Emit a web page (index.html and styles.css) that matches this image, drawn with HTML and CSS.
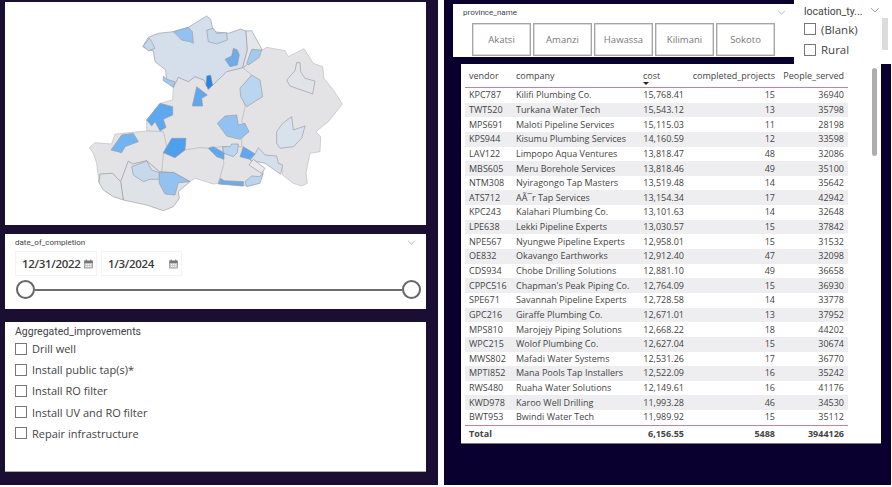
FILE: index.html
```html
<!DOCTYPE html>
<html lang="en">
<head>
<meta charset="utf-8">
<title>Vendor report</title>
<link rel="stylesheet" href="styles.css">
</head>
<body>
<div class="page">
  <aside class="left">
    <section class="panel map-panel">
      <svg class="map" viewBox="15 6 1263 669" aria-label="Map">
        <g class="areas">
          <polygon class="grey" points="728,203 740,195 770,160 787,150 800,142 855,152 865,170 912,146 940,190 968,200 972,235 1000,270 1027,312 985,365 948,395 962,410 960,455 930,460 918,520 922,550 905,558 880,550 848,525 845,495 795,470 765,462 745,450 725,440 725,400 745,395 725,365 735,320 722,265 755,225"/>
          <polygon class="grey" points="518,300 520,262 535,232 565,245 585,230 612,240 625,268 680,215 728,203 755,225 722,265 735,320 725,365 745,395 725,405 725,440 668,440 625,445 600,443 555,450 490,460 500,440 490,395 440,393 440,360 480,310"/>
          <polygon class="pale" points="428,140 445,112 475,100 520,95 565,82 620,48 632,58 640,95 685,100 722,87 738,93 742,150 728,203 680,215 625,268 612,240 585,230 565,245 535,232 520,262 500,240 497,210 465,185 460,152 445,150"/>
          <polygon class="ne" points="738,93 755,92 787,150 770,160 740,195 728,203 742,150"/>
          <polygon class="grey" points="490,460 555,450 600,443 625,445 668,440 668,470 672,490 655,550 640,552 585,535 570,545 520,518 478,515 485,515"/>
          <polygon class="grey" points="668,440 725,440 745,450 765,462 750,480 790,515 775,550 730,558 655,550 672,490 668,470"/>
          <polygon class="grey" points="268,443 285,428 335,432 345,402 440,393 490,395 500,440 490,460 485,515 478,515 440,482 398,492 385,483 362,545 338,520 300,522 297,548 290,490 280,460"/>
          <polygon class="sw" points="385,483 398,492 440,482 478,515 522,518 570,545 535,575 538,595 520,620 490,632 440,615 370,600 362,545"/>
          <polygon class="sw" points="297,548 300,522 338,520 362,545 370,600 340,590 310,570"/>
          <polygon class="pale" points="775,443 795,465 830,468 835,490 848,495 842,523 795,490 750,480 765,462"/>
          <polygon class="box" points="760,478 795,505 785,520 747,495"/>
          <polygon class="b5" points="520,95 565,82 577,95 580,130 570,125 545,120"/>
          <polygon class="b2" points="620,90 640,85 650,100 680,98 682,120 650,132 625,125"/>
          <polygon class="b2" points="430,138 448,115 455,125 465,145 445,152"/>
          <polygon class="b7" points="675,178 695,168 700,145 712,150 718,165 712,195 690,200"/>
          <polygon class="b4" points="755,148 785,150 778,172 745,195 740,190"/>
          <polygon class="b9" points="620,228 632,225 638,255 625,268 618,255"/>
          <polygon class="b4" points="490,228 500,238 525,245 520,262 490,242"/>
          <polygon class="b8" points="590,260 622,285 605,295 608,318 577,318"/>
          <polygon class="b8" points="480,310 518,320 518,345 490,358 498,382 480,393 465,365 455,378 440,360"/>
          <polygon class="b6" points="365,405 400,400 415,425 375,440 365,458 333,450"/>
          <polygon class="b85" points="515,415 558,415 555,450 525,473 490,458"/>
          <polygon class="b5" points="675,348 710,345 715,375 735,370 747,395 720,418 680,408 652,370"/>
          <polygon class="b3" points="720,265 755,225 780,240 788,290 740,320 722,290"/>
          <polygon class="b8" points="625,445 640,440 672,458 672,478 650,470"/>
          <polygon class="b3" points="668,440 690,440 695,432 715,432 712,458 700,470 672,460"/>
          <polygon class="b8" points="730,440 765,462 750,478 720,470"/>
          <polygon class="b7" points="662,535 672,542 730,545 730,558 655,552"/>
          <polygon class="b3" points="735,545 755,528 778,530 790,520 780,550 740,560"/>
          <polygon class="b2" points="395,500 440,483 455,510 478,518 478,538 450,538 430,545 400,525"/>
          <polygon class="b5" points="478,518 520,517 570,545 535,548 525,585 495,582 478,550"/>
          <polygon class="e1" points="860,240 885,212 890,188 900,188 902,215 915,235 945,243 938,282 870,258"/>
          <polygon class="e2" points="830,395 848,370 875,350 880,390 915,378 905,415 880,440 840,445 830,430"/>
        </g>
      </svg>
    </section>

    <section class="panel date-panel">
      <div class="slicer-head">
        <span class="small-title">date_of_completion</span>
        <svg class="chevron" viewBox="0 0 10 6"><polyline points="1,1 5,5 9,1"/></svg>
      </div>
      <div class="date-boxes">
        <div class="date-box">
          <span>12/31/2022</span>
          <svg class="cal" viewBox="0 0 10 10"><rect class="cal-bg" x="0.5" y="1.5" width="9" height="8"/><rect class="cal-top" x="0.5" y="1.5" width="9" height="2.5"/><line class="cal-pin" x1="2.5" y1="0" x2="2.5" y2="2"/><line class="cal-pin" x1="7.5" y1="0" x2="7.5" y2="2"/><path class="cal-grid" d="M2 5.5h1.4M4.3 5.5h1.4M6.6 5.5h1.4M2 7.7h1.4M4.3 7.7h1.4M6.6 7.7h1.4"/></svg>
        </div>
        <div class="date-box">
          <span>1/3/2024</span>
          <svg class="cal" viewBox="0 0 10 10"><rect class="cal-bg" x="0.5" y="1.5" width="9" height="8"/><rect class="cal-top" x="0.5" y="1.5" width="9" height="2.5"/><line class="cal-pin" x1="2.5" y1="0" x2="2.5" y2="2"/><line class="cal-pin" x1="7.5" y1="0" x2="7.5" y2="2"/><path class="cal-grid" d="M2 5.5h1.4M4.3 5.5h1.4M6.6 5.5h1.4M2 7.7h1.4M4.3 7.7h1.4M6.6 7.7h1.4"/></svg>
        </div>
      </div>
      <div class="slider">
        <span class="handle"></span>
        <span class="track"></span>
        <span class="handle"></span>
      </div>
    </section>

    <section class="panel agg-panel">
      <h2 class="agg-title">Aggregated_improvements</h2>
      <ul class="checks">
        <li><span class="box-input"></span>Drill well</li>
        <li><span class="box-input"></span>Install public tap(s)*</li>
        <li><span class="box-input"></span>Install RO filter</li>
        <li><span class="box-input"></span>Install UV and RO filter</li>
        <li><span class="box-input"></span>Repair infrastructure</li>
      </ul>
    </section>
  </aside>

  <main class="right">
    <div class="top-row">
      <section class="province">
        <div class="slicer-head">
          <span class="small-title">province_name</span>
          <svg class="chevron" viewBox="0 0 10 6"><polyline points="1,1 5,5 9,1"/></svg>
        </div>
        <div class="tiles">
          <span class="tile">Akatsi</span>
          <span class="tile">Amanzi</span>
          <span class="tile">Hawassa</span>
          <span class="tile">Kilimani</span>
          <span class="tile">Sokoto</span>
        </div>
      </section>
      <section class="location">
        <div class="loc-head">
          <span>location_ty...</span>
          <svg class="chevron loc-chevron" viewBox="0 0 10 6"><polyline points="1,1 5,5 9,1"/></svg>
        </div>
        <div class="loc-item"><span class="box-input"></span>(Blank)</div>
        <div class="loc-item"><span class="box-input"></span>Rural</div>
        <span class="loc-scroll"></span>
      </section>
    </div>

    <section class="table-card">
      <div class="row head">
        <span>vendor</span><span>company</span>
        <span class="cost-head">cost<i class="sort"></i></span>
        <span class="num">completed_projects</span><span class="num">People_served</span>
      </div>
      <div class="row"><span>KPC787</span><span>Kilifi Plumbing Co.</span><span class="num">15,768.41</span><span class="num">15</span><span class="num">36940</span></div>
      <div class="row"><span>TWT520</span><span>Turkana Water Tech</span><span class="num">15,543.12</span><span class="num">13</span><span class="num">35798</span></div>
      <div class="row"><span>MPS691</span><span>Maloti Pipeline Services</span><span class="num">15,115.03</span><span class="num">11</span><span class="num">28198</span></div>
      <div class="row"><span>KPS944</span><span>Kisumu Plumbing Services</span><span class="num">14,160.59</span><span class="num">12</span><span class="num">33598</span></div>
      <div class="row"><span>LAV122</span><span>Limpopo Aqua Ventures</span><span class="num">13,818.47</span><span class="num">48</span><span class="num">32086</span></div>
      <div class="row"><span>MBS605</span><span>Meru Borehole Services</span><span class="num">13,818.46</span><span class="num">49</span><span class="num">35100</span></div>
      <div class="row"><span>NTM308</span><span>Nyiragongo Tap Masters</span><span class="num">13,519.48</span><span class="num">14</span><span class="num">35642</span></div>
      <div class="row"><span>ATS712</span><span>AÃ¯r Tap Services</span><span class="num">13,154.34</span><span class="num">17</span><span class="num">42942</span></div>
      <div class="row"><span>KPC243</span><span>Kalahari Plumbing Co.</span><span class="num">13,101.63</span><span class="num">14</span><span class="num">32648</span></div>
      <div class="row"><span>LPE638</span><span>Lekki Pipeline Experts</span><span class="num">13,030.57</span><span class="num">15</span><span class="num">37842</span></div>
      <div class="row"><span>NPE567</span><span>Nyungwe Pipeline Experts</span><span class="num">12,958.01</span><span class="num">15</span><span class="num">31532</span></div>
      <div class="row"><span>OE832</span><span>Okavango Earthworks</span><span class="num">12,912.40</span><span class="num">47</span><span class="num">32098</span></div>
      <div class="row"><span>CDS934</span><span>Chobe Drilling Solutions</span><span class="num">12,881.10</span><span class="num">49</span><span class="num">36658</span></div>
      <div class="row"><span>CPPC516</span><span>Chapman's Peak Piping Co.</span><span class="num">12,764.09</span><span class="num">15</span><span class="num">36930</span></div>
      <div class="row"><span>SPE671</span><span>Savannah Pipeline Experts</span><span class="num">12,728.58</span><span class="num">14</span><span class="num">33778</span></div>
      <div class="row"><span>GPC216</span><span>Giraffe Plumbing Co.</span><span class="num">12,671.01</span><span class="num">13</span><span class="num">37952</span></div>
      <div class="row"><span>MPS810</span><span>Marojejy Piping Solutions</span><span class="num">12,668.22</span><span class="num">18</span><span class="num">44202</span></div>
      <div class="row"><span>WPC215</span><span>Wolof Plumbing Co.</span><span class="num">12,627.04</span><span class="num">15</span><span class="num">30674</span></div>
      <div class="row"><span>MWS802</span><span>Mafadi Water Systems</span><span class="num">12,531.26</span><span class="num">17</span><span class="num">36770</span></div>
      <div class="row"><span>MPTI852</span><span>Mana Pools Tap Installers</span><span class="num">12,522.09</span><span class="num">16</span><span class="num">35242</span></div>
      <div class="row"><span>RWS480</span><span>Ruaha Water Solutions</span><span class="num">12,149.61</span><span class="num">16</span><span class="num">41176</span></div>
      <div class="row"><span>KWD978</span><span>Karoo Well Drilling</span><span class="num">11,993.28</span><span class="num">46</span><span class="num">34530</span></div>
      <div class="row"><span>BWT953</span><span>Bwindi Water Tech</span><span class="num">11,989.92</span><span class="num">15</span><span class="num">35112</span></div>
      <div class="row total"><span>Total</span><span></span><span class="num">6,156.55</span><span class="num">5488</span><span class="num">3944126</span></div>
      <span class="table-scroll"></span>
    </section>
  </main>
</div>
</body>
</html>
```

FILE: styles.css
```css
* { box-sizing: border-box; }
html, body { margin: 0; padding: 0; background: #fff; }
body { width: 892px; height: 487px; overflow: hidden; font-family: "Open Sans", "Noto Sans", sans-serif; color: #333; }
.page { display: flex; height: 485px; gap: 6px; }

/* left column */
.left { width: 438px; background: #1a0f33; padding: 2px 12px 0 5px; display: flex; flex-direction: column; }
.panel { background: #fff; width: 421px; }
.map-panel { height: 223px; }
.map { display: block; width: 421px; height: 223px; }
.areas polygon { stroke: #9a9ca2; stroke-width: 2; stroke-linejoin: round; }
.areas .grey { fill: #e3e3e5; stroke: #bcbcbf; }
.pale { fill: #d5dfec; }
.ne { fill: #e3e6ea; }
.sw { fill: #dfe2e6; }
.box { fill: #e9e9ea; }
.e1 { fill: #e0e3e8; }
.e2 { fill: #d8e2ec; }
.b2 { fill: #c5d8ec; }
.b3 { fill: #bad5ef; }
.b4 { fill: #a4c9ef; }
.b5 { fill: #94c2f0; }
.b6 { fill: #72b3f2; }
.b7 { fill: #6fabe8; }
.b8 { fill: #5ea8f0; }
.b85 { fill: #4f9fef; }
.b9 { fill: #2483e6; }

.date-panel { height: 75px; margin-top: 9px; padding: 3px 10px 0 10px; }
.slicer-head { display: flex; justify-content: space-between; align-items: center; height: 11px; }
.small-title { font-size: 8px; line-height: 11px; color: #444; font-family: Roboto, sans-serif; }
.chevron { width: 9px; height: 5px; display: block; }
.chevron polyline { fill: none; stroke: #a8a8ac; stroke-width: 1; }
.date-boxes { display: flex; gap: 4px; margin-top: 3px; }
.date-box { width: 82px; height: 25px; display: flex; align-items: center; justify-content: space-between; padding: 0 4px 0 7px; box-shadow: inset 0 0 0 1px #f3f3f4; font-size: 11.5px; font-weight: 600; color: #3a3a3a; }
.date-box span { letter-spacing: -0.3px; }
.date-box + .date-box { width: 81px; }
.cal { width: 9px; height: 10px; display: block; }
.cal-bg { fill: #c9c9c9; stroke: #777; stroke-width: 0.6; }
.cal-top { fill: #777; }
.cal-pin { stroke: #666; stroke-width: 1; }
.cal-grid { stroke: #fff; stroke-width: 1; fill: none; }
.slider { display: flex; align-items: center; margin: 4px -5px 0 1px; }
.handle { width: 19px; height: 19px; border-radius: 50%; border: 2px solid #666; background: #fff; flex: none; }
.track { height: 2px; background: #6d6d6d; flex: 1; }

.agg-panel { height: 150px; margin-top: 13px; padding: 3px 10px 0; box-shadow: inset 0 -1px 0 #aaa; }
.agg-title { margin: 0; font-size: 10.5px; line-height: 13px; font-weight: 400; color: #444; font-family: Roboto, sans-serif; }
.checks { list-style: none; margin: 0; padding: 0; }
.checks li { height: 21.2px; display: flex; align-items: center; gap: 5px; font-size: 11px; color: #444; }
.box-input { width: 12px; height: 12px; border: 1px solid #777; background: #fff; flex: none; }

/* right column */
.right { width: 447px; background: #0a0030; }
.top-row { display: flex; align-items: flex-start; height: 64px; padding-left: 9px; }
.province { width: 341px; height: 53px; margin-top: 4px; background: #fff; padding: 3px 8px 0 10px; }
.tiles { display: flex; gap: 2px; margin-top: 5px; margin-left: 9px; }
.tile { width: 59px; height: 33px; border: 1px solid #a6a6a6; box-shadow: inset 0 0 0 0.5px #bbb; display: flex; align-items: center; justify-content: center; font-size: 9.5px; color: #777; }
.location { position: relative; width: 97px; height: 64px; background: #fff; padding: 4px 0 0 10px; color: #444; font-size: 11.5px; }
.loc-head { display: flex; align-items: center; justify-content: space-between; height: 14px; padding-right: 11px; font-size: 10.5px; font-family: Roboto, sans-serif; }
.loc-chevron { margin-top: -2px; width: 10px; height: 6px; }
.loc-item { display: flex; align-items: center; gap: 5px; height: 20.5px; }
.loc-head + .loc-item { margin-top: 1px; }
.loc-scroll { position: absolute; left: 88px; top: 18px; width: 6px; height: 32px; background: #dcdcdc; }

.table-card { position: relative; margin-left: 17px; width: 420px; height: 379px; background: #fff; padding-left: 4px; box-shadow: 0 1px 0 #777; font-size: 9px; color: #444; }
.row { display: grid; grid-template-columns: 47px 127px 49px 91px 69px; width: 383px; height: 14.65px; align-items: center; line-height: 14px; }
.row > span { padding: 0 4px; white-space: nowrap; }
.row:nth-child(odd):not(.total) { background: #eeeef0; }
.num { text-align: right; }
.head { height: 24px; border-bottom: 1px solid #c97f9f; background: #fff !important; align-items: start; padding-top: 5px; }
.cost-head { position: relative; }
.sort { position: absolute; left: 4px; top: 13px; width: 0; height: 0; border: 3px solid transparent; border-top: 3px solid #222; border-bottom: 0; }
.total { height: 18px; border-top: 1px solid #c97f9f; font-weight: 700; }
.table-scroll { position: absolute; left: 411px; top: 4px; width: 5px; height: 88px; border-radius: 3px; background: #aeaeb0; }
```
